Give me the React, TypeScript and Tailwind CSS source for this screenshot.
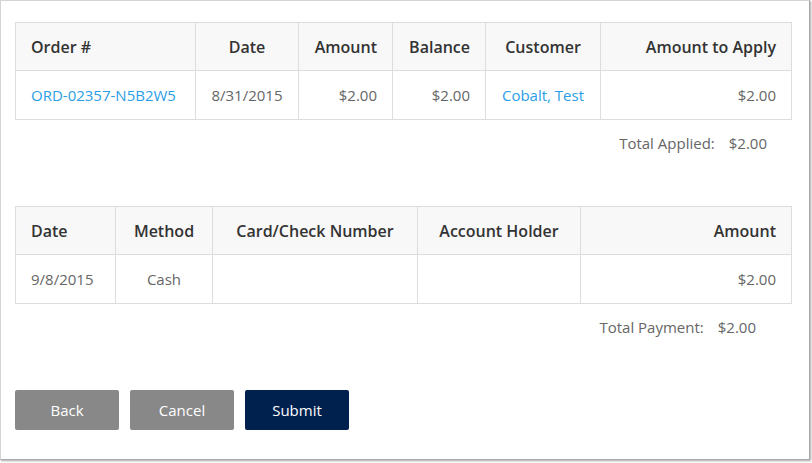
import React from "react";

const headCell =
  "h-[48px] border border-[#dddddd] bg-[#f8f8f8] px-[15px] text-[16px] font-semibold text-[#333333]";
const bodyCell =
  "h-[49px] border border-[#dddddd] px-[15px] text-[15px] font-normal text-[#666666]";

export default function App() {
  return (
    <div
      className="h-[463px] w-[812px] bg-white"
      style={{ fontFamily: '"Open Sans", "Liberation Sans", sans-serif' }}
    >
      <div className="h-[460px] w-[810px] border border-[#d4d4d4] border-r-[#a8a8a8] border-b-[#a8a8a8] bg-white pl-[14px] pr-[19px] pt-[21px] shadow-[1px_1px_2px_rgba(0,0,0,0.35)]">
        {/* orders */}
        <table className="w-[776px] table-fixed border-collapse">
          <colgroup>
            <col className="w-[180px]" />
            <col className="w-[103px]" />
            <col className="w-[94px]" />
            <col className="w-[93px]" />
            <col className="w-[115px]" />
            <col className="w-[191px]" />
          </colgroup>
          <thead>
            <tr>
              <th className={`${headCell} text-left`}>Order #</th>
              <th className={`${headCell} text-center`}>Date</th>
              <th className={`${headCell} text-right`}>Amount</th>
              <th className={`${headCell} text-right`}>Balance</th>
              <th className={`${headCell} text-center`}>Customer</th>
              <th className={`${headCell} text-right`}>Amount to Apply</th>
            </tr>
          </thead>
          <tbody>
            <tr>
              <td className={`${bodyCell} text-left`}>
                <a href="#" className="text-[#2a9ee6]">
                  ORD-02357-N5B2W5
                </a>
              </td>
              <td className={`${bodyCell} text-center`}>8/31/2015</td>
              <td className={`${bodyCell} text-right`}>$2.00</td>
              <td className={`${bodyCell} text-right`}>$2.00</td>
              <td className={`${bodyCell} text-center`}>
                <a href="#" className="text-[#2a9ee6]">
                  Cobalt, Test
                </a>
              </td>
              <td className={`${bodyCell} text-right`}>$2.00</td>
            </tr>
          </tbody>
        </table>

        <div className="flex h-[46px] items-center justify-end pr-[23px] text-[15px] text-[#666666]">
          <span>Total Applied:</span>
          <span className="ml-[14px]">$2.00</span>
        </div>

        {/* payments */}
        <table className="mt-[40px] w-[776px] table-fixed border-collapse">
          <colgroup>
            <col className="w-[100px]" />
            <col className="w-[97px]" />
            <col className="w-[205px]" />
            <col className="w-[163px]" />
            <col className="w-[211px]" />
          </colgroup>
          <thead>
            <tr>
              <th className={`${headCell} text-left`}>Date</th>
              <th className={`${headCell} text-center`}>Method</th>
              <th className={`${headCell} text-center`}>Card/Check Number</th>
              <th className={`${headCell} text-center`}>Account Holder</th>
              <th className={`${headCell} text-right`}>Amount</th>
            </tr>
          </thead>
          <tbody>
            <tr>
              <td className={`${bodyCell} text-left`}>9/8/2015</td>
              <td className={`${bodyCell} text-center`}>Cash</td>
              <td className={bodyCell}></td>
              <td className={bodyCell}></td>
              <td className={`${bodyCell} text-right`}>$2.00</td>
            </tr>
          </tbody>
        </table>

        <div className="flex h-[46px] items-center justify-end pr-[34px] text-[15px] text-[#666666]">
          <span>Total Payment:</span>
          <span className="ml-[14px]">$2.00</span>
        </div>

        <div className="mt-[40px] flex gap-[11px]">
          <button className="h-[40px] w-[104px] rounded-[2px] bg-[#888888] text-[15px] text-white">
            Back
          </button>
          <button className="h-[40px] w-[104px] rounded-[2px] bg-[#888888] text-[15px] text-white">
            Cancel
          </button>
          <button className="h-[40px] w-[104px] rounded-[2px] bg-[#00204e] text-[15px] text-white">
            Submit
          </button>
        </div>
      </div>
    </div>
  );
}
